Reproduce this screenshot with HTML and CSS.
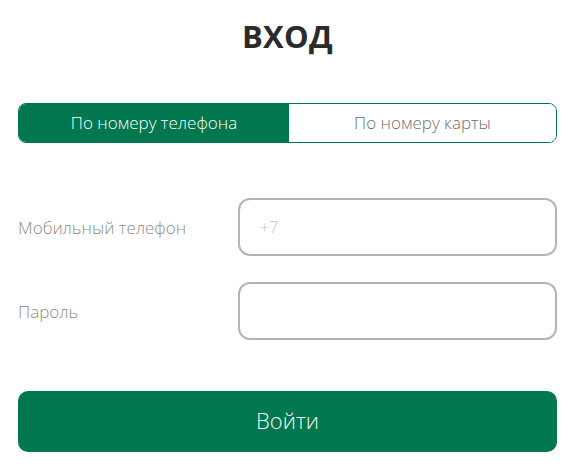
FILE: index.html
```html
<!DOCTYPE html>
<html lang="ru">
<head>
<meta charset="utf-8">
<title>Вход</title>
<link rel="stylesheet" href="styles.css">
</head>
<body>
<main class="login">
  <h1 class="login__title">ВХОД</h1>
  <div class="tabs">
    <button class="tabs__item tabs__item--active" type="button">По номеру телефона</button>
    <button class="tabs__item" type="button">По номеру карты</button>
  </div>
  <form class="form">
    <div class="form__row">
      <label class="form__label" for="phone">Мобильный телефон</label>
      <input class="form__input" id="phone" type="tel" placeholder="+7">
    </div>
    <div class="form__row">
      <label class="form__label" for="pass">Пароль</label>
      <input class="form__input" id="pass" type="password">
    </div>
    <button class="form__submit" type="button">Войти</button>
  </form>
</main>
</body>
</html>
```
FILE: styles.css
```css
* { box-sizing: border-box; }
html, body { margin: 0; background: #fff; }
body {
  font-family: "Open Sans", "Noto Sans", sans-serif;
  font-weight: 300;
  color: #333;
}
.login {
  padding: 15px 23px 0 18px;
}
.login__title {
  margin: 0;
  text-align: center;
  font-family: "Open Sans", sans-serif;
  font-weight: 700;
  font-size: 31px;
  line-height: 42px;
  color: #2b2b2b;
  letter-spacing: 0.3px;
}
.tabs {
  margin-top: 46px;
  display: grid;
  grid-template-columns: 270px 1fr;
  height: 40px;
  border: 1px solid #00774f;
  border-radius: 8px;
  overflow: hidden;
}
.tabs__item {
  border: 0;
  background: #fff;
  font-family: inherit;
  font-weight: 300;
  font-size: 17px;
  line-height: 38px;
  color: #6f6f6f;
  padding: 0 0 2px;
}
.tabs__item--active {
  background: #00774f;
  color: #fff;
}
.form {
  margin-top: 55px;
  display: flex;
  flex-direction: column;
  gap: 26px;
}
.form__row {
  display: grid;
  grid-template-columns: 220px 1fr;
  align-items: center;
}
.form__label {
  font-size: 17px;
  color: #8c8c8c;
}
.form__input {
  height: 58px;
  border: 2px solid #b4b4b4;
  border-radius: 12px;
  padding: 0 20px;
  font-family: inherit;
  font-weight: 300;
  font-size: 16px;
  color: #333;
  outline: none;
}
.form__input::placeholder { color: #c6c6c6; }
.form__submit {
  margin-top: 25px;
  height: 61px;
  border: 0;
  border-radius: 10px;
  background: #00774f;
  color: #eef7f2;
  font-family: inherit;
  font-weight: 300;
  font-size: 22px;
  padding: 0 0 4px;
}
```
